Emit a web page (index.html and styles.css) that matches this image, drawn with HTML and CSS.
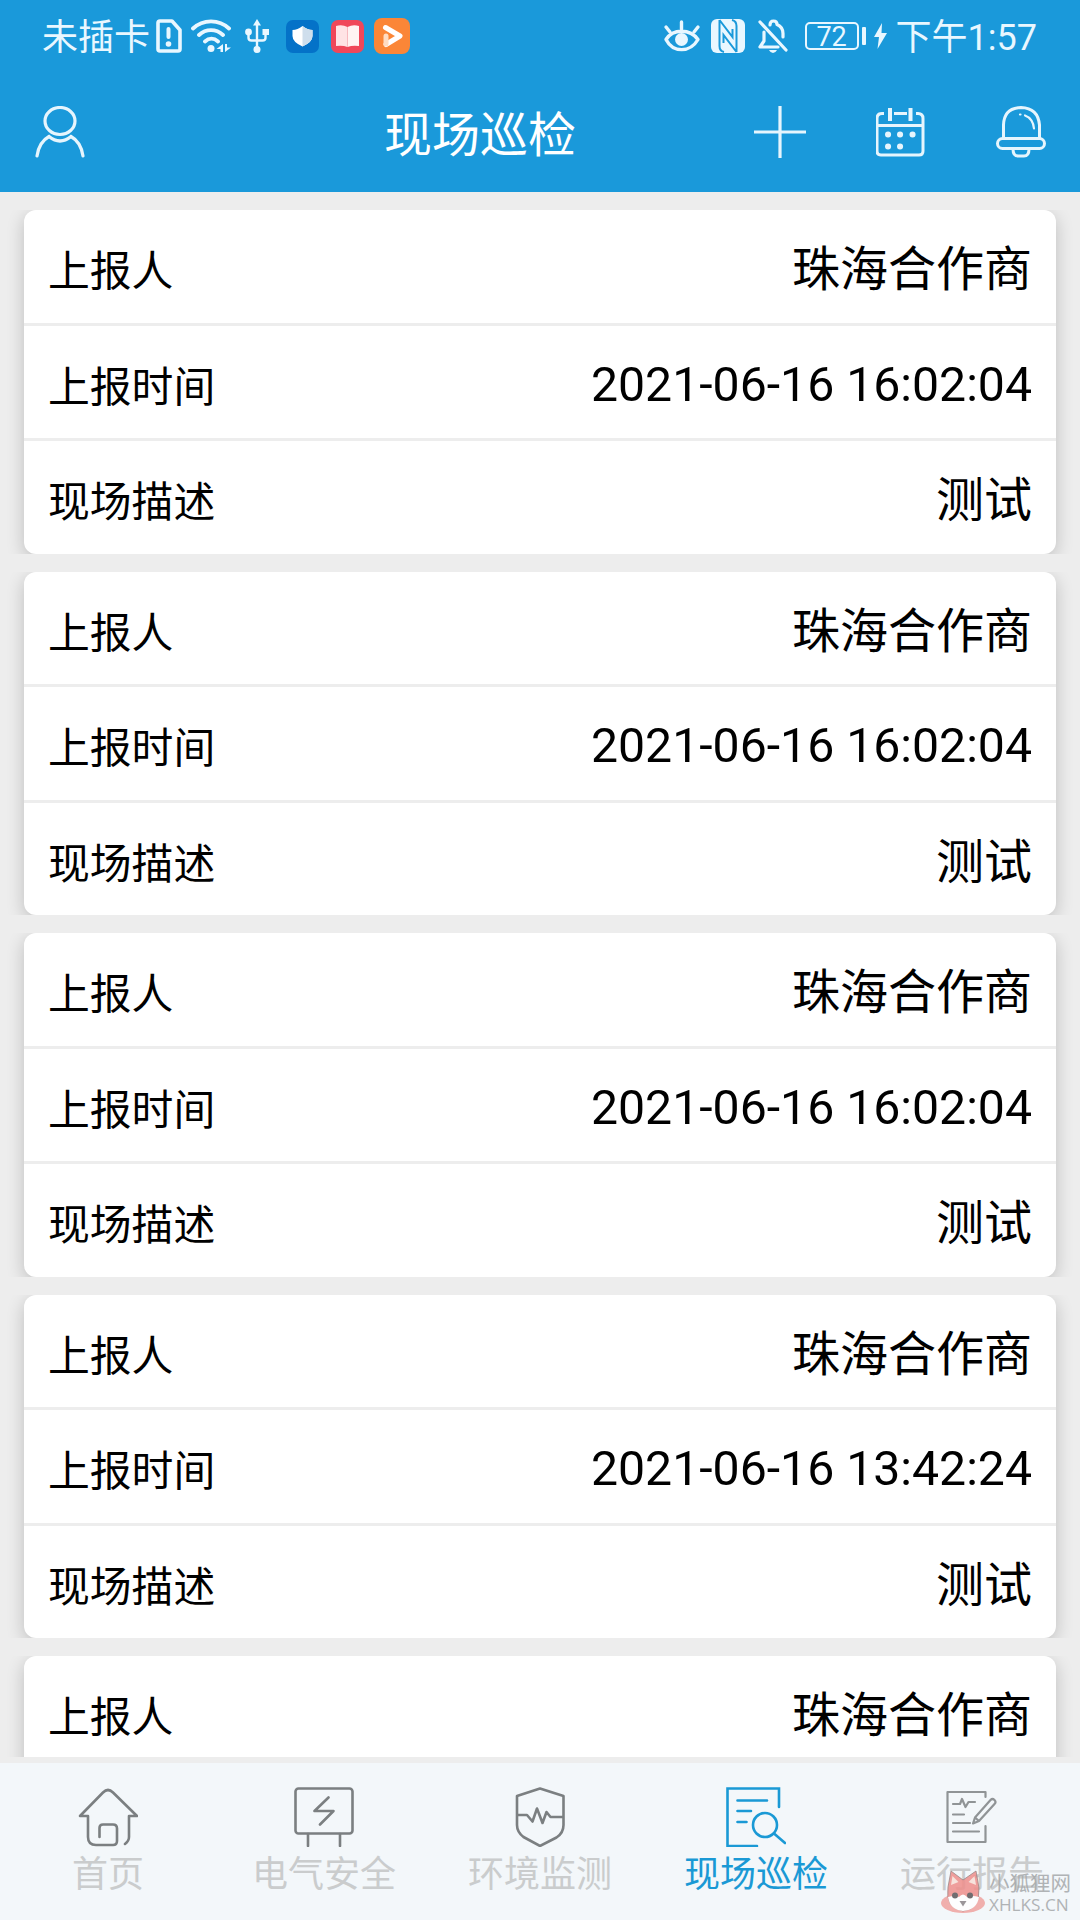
FILE: index.html
```html
<!DOCTYPE html>
<html lang="zh-CN">
<head>
    <meta charset="UTF-8">
    <meta name="viewport" content="width=device-width, initial-scale=1.0">
    <title>现场巡检</title>
    <link rel="stylesheet" href="styles.css">
</head>
<body>
    <header class="header">
        <!-- 状态栏 -->
        <div class="status">
            <div class="status-left">
                <span>未插卡</span>
                <svg class="sim" width="26" height="34" viewBox="0 0 26 34" fill="none" stroke="currentColor" stroke-width="3.6" stroke-linejoin="round">
                    <path d="M4 2h12l8 9v19a2 2 0 0 1-2 2H4a2 2 0 0 1-2-2V4a2 2 0 0 1 2-2z"/>
                    <path d="M12.5 10v8" stroke-width="4" stroke-linecap="round"/>
                    <circle cx="12.5" cy="25" r="2.8" fill="currentColor" stroke="none"/>
                </svg>
                <svg class="wifi" width="40" height="34" viewBox="0 0 40 34" fill="none" stroke="currentColor" stroke-width="3.8" stroke-linecap="round">
                    <path d="M2 9.5c10-9.500 26-9.500 36 0M8 16c7-6.600 17-6.600 24 0M14 22.500c4-3.700 9-3.700 13 0"/>
                    <circle cx="20" cy="29.500" r="3.500" fill="currentColor" stroke="none"/>
                    <path d="M32 25v8h-2.500v-3h-4zM34 33v-8h2v3.500h4z" fill="currentColor" stroke="none"/>
                </svg>
                <svg class="usb" width="24" height="34" viewBox="0 0 24 34" fill="none" stroke="currentColor" stroke-width="2.400">
                    <path d="M12 5v25M3.500 14v5q0 2.500 3 2.500h11q3 0 3-2.500v-5"/>
                    <path d="M12 0l4 6.500H8z" fill="currentColor" stroke="none"/>
                    <circle cx="3.500" cy="13" r="3.400" fill="currentColor" stroke="none"/>
                    <path d="M17.500 10H24v6h-6.500z" fill="currentColor" stroke="none"/>
                    <circle cx="12" cy="30.500" r="3.500" fill="currentColor" stroke="none"/>
                </svg>
                <svg class="app-guard" width="33" height="33" viewBox="0 0 33 33">
                    <rect width="33" height="33" rx="7" fill="#0472c8"/>
                    <path d="M16.500 6q5 4 10 4v6q0 6-10 10.500-10-4.500-10-10.500v-6q5 0 10-4z" fill="#fff"/>
                    <path d="M16.500 6q5 4 10 4v6q0 6-10 10.500z" fill="#cfdeec"/>
                </svg>
                <svg class="app-book" width="33" height="33" viewBox="0 0 33 33">
                    <rect width="33" height="33" rx="7" fill="#f0475a"/>
                    <path d="M5 6q6-2 11.500 1v20q-5-2-11.500-1z" fill="#ffe3e5"/>
                    <path d="M28 6q-6-2-11.500 1v20q5-2 11.500-1z" fill="#fff3f3"/>
                    <path d="M16.500 7v20" stroke="#f7b9bf"/>
                </svg>
                <svg class="app-play" width="36" height="36" viewBox="0 0 36 36">
                    <rect width="36" height="36" rx="8" fill="#fb8637"/>
                    <path d="M11.500 9.500L26 18 12 26.500" fill="none" stroke="#fff" stroke-width="5" stroke-linecap="round" stroke-linejoin="round"/>
                    <path d="M12 18v8" stroke="#ffdcc2" stroke-width="5" stroke-linecap="round"/>
                </svg>
            </div>
            <div class="status-right">
                <svg class="eye" width="38" height="34" viewBox="0 0 38 34" fill="none" stroke="currentColor" stroke-width="3.400" stroke-linecap="round" stroke-linejoin="round">
                    <path d="M3 20.500C10 9.500 27 9.500 35 20.500 27 34 10 34 3 20.500z"/>
                    <circle cx="18.500" cy="20.500" r="6.500" fill="currentColor" stroke="none"/>
                    <path d="M18.500 3v7M3 8l4 5M35 8l-4 5"/>
                </svg>
                <svg class="nfc" width="34" height="34" viewBox="0 0 34 34">
                    <rect width="34" height="34" rx="6" fill="currentColor"/>
                    <path d="M8.500 1v26q0 5 4.500 6M25.500 33V7q0-5-4.500-6M8.500 1L21.500 18V10M25.500 33L12.500 16v8" fill="none" stroke="#1a99da" stroke-width="2"/>
                </svg>
                <svg class="mute" width="30" height="34" viewBox="0 0 30 34" fill="none" stroke="currentColor" stroke-width="3.200" stroke-linecap="round" stroke-linejoin="round">
                    <path d="M2 3l26 28M6 13v9l-4 6h18M12 6q0-4 3.500-4t3.500 3.500q6 2.500 6 9V18"/>
                    <path d="M11 31h8q-1.500 3-4 3t-4-3z" fill="currentColor" stroke="none"/>
                </svg>
                <div class="battery">72</div>
                <svg class="bolt" width="13" height="26" viewBox="0 0 13 26" fill="currentColor"><path d="M8 0L0 14h5L3.500 26 13 10H7.500z"/></svg>
                <span>下午1:57</span>
            </div>
        </div>
        <!-- 标题栏 -->
        <div class="navbar">
            <svg class="user" width="50" height="52" viewBox="0 0 50 52" fill="none" stroke="currentColor" stroke-width="3.200" stroke-linecap="round">
                <ellipse cx="25" cy="15" rx="15" ry="13.500"/>
                <path d="M2 50q2-14 12-19.500 11 9 22 0Q46 36 48 50"/>
            </svg>
            <h1>现场巡检</h1>
            <div class="actions">
                <svg width="52" height="52" viewBox="0 0 52 52" stroke="currentColor" stroke-width="3.200"><path d="M26 0v52M0 26h52"/></svg>
                <svg width="50" height="52" viewBox="1 0 50 52" fill="none" stroke="currentColor" stroke-width="3">
                    <path d="M9 7.500H7q-5 0-5 5V45q0 4 4 4h38q4 0 4-4V12.500q0-5-5-5h-2M19 7.500h13M2 19.500h46"/>
                    <path d="M15 2v13M35.500 2v13" stroke-width="4"/>
                    <path d="M13 28.500h.1M25 28.500h.1M37.500 28.500h.1M13 40.500h.1M25 40.500h.1" stroke-width="6" stroke-linecap="round"/>
                </svg>
                <svg width="50" height="52" viewBox="0 0 50 52" fill="none" stroke="currentColor" stroke-width="3" stroke-linecap="round">
                    <path d="M7.500 32V19Q8 2 25 1.500 42 2 43.500 19v13"/>
                    <rect x="1.500" y="32.500" width="47" height="10" rx="5"/>
                    <path d="M17 43q0 7 5 7h6q5 0 5-7"/>
                    <path d="M29 9.500q8 3 9 13M24 8.500h.5" stroke-width="2.200"/>
                </svg>
            </div>
        </div>
    </header>

    <main class="list">
        <div class="item">
            <ul class="card">
                <li><label>上报人</label><span>珠海合作商</span></li>
                <li><label>上报时间</label><span class="time">2021-06-16 16:02:04</span></li>
                <li><label>现场描述</label><span>测试</span></li>
            </ul>
        </div>
        <div class="item">
            <ul class="card">
                <li><label>上报人</label><span>珠海合作商</span></li>
                <li><label>上报时间</label><span class="time">2021-06-16 16:02:04</span></li>
                <li><label>现场描述</label><span>测试</span></li>
            </ul>
        </div>
        <div class="item">
            <ul class="card">
                <li><label>上报人</label><span>珠海合作商</span></li>
                <li><label>上报时间</label><span class="time">2021-06-16 16:02:04</span></li>
                <li><label>现场描述</label><span>测试</span></li>
            </ul>
        </div>
        <div class="item">
            <ul class="card">
                <li><label>上报人</label><span>珠海合作商</span></li>
                <li><label>上报时间</label><span class="time">2021-06-16 13:42:24</span></li>
                <li><label>现场描述</label><span>测试</span></li>
            </ul>
        </div>
        <div class="item">
            <ul class="card">
                <li><label>上报人</label><span>珠海合作商</span></li>
                <li></li>
                <li></li>
            </ul>
        </div>
    </main>

    <!-- 底部菜单 -->
    <nav class="tabbar">
        <a class="tab">
            <svg width="60" height="60" viewBox="0 0 60 60" fill="none" stroke="currentColor" stroke-width="2.600" stroke-linecap="round" stroke-linejoin="round">
                <path d="M21.500 50V41q0-3.500 3.500-3.500h10q4 0 4 4V54q0 4-4 4H18q-8 0-8-8V29H2L25 5.500q5-5 10 0L59 29h-8v21q0 4-4 7"/>
            </svg>
            <span>首页</span>
        </a>
        <a class="tab">
            <svg width="60" height="60" viewBox="0 0 60 60" fill="none" stroke="currentColor" stroke-width="2.600" stroke-linecap="round" stroke-linejoin="round">
                <rect x="1.500" y="1.500" width="57" height="45" rx="3"/>
                <path d="M14 47v12M46 47v12M34.500 10.500L20.500 24h19L26 37.500"/>
            </svg>
            <span>电气安全</span>
        </a>
        <a class="tab">
            <svg width="60" height="60" viewBox="0 0 60 60" fill="none" stroke="currentColor" stroke-width="2.600" stroke-linejoin="round">
                <path d="M30 1.500L53.500 9v29q0 8-7 12.500L30 59 13.500 50Q7 45 7 38V9z"/>
                <path d="M7 28h10l5.500 6.500 4.500-13L32.500 36l4-11 4 5h13"/>
            </svg>
            <span>环境监测</span>
        </a>
        <a class="tab active">
            <svg width="60" height="60" viewBox="0 0 60 60" fill="none" stroke="currentColor" stroke-width="2.600" stroke-linecap="round">
                <path d="M53 20V1.500H1.500V59H31M11.500 13.500H41M11.500 24H25M11.500 35h9"/>
                <circle cx="39" cy="38" r="12"/>
                <path d="M48 46.500L59 56"/>
            </svg>
            <span>现场巡检</span>
        </a>
        <a class="tab report">
            <svg width="60" height="60" viewBox="1 0 60 60" fill="none" stroke="currentColor" stroke-width="2.200" stroke-linecap="round" stroke-linejoin="round">
                <path d="M44.500 10V5H6.500v50h38V39M12 17h7l2-5 3.500 8 3-5H34M12 27.500h11M12 36h17M12 44.500h26"/>
                <path d="M49.500 13q2-2 4 0t0 4L38 34l-4-3.500zM34 30.500L32 36.500l6-2.500"/>
            </svg>
            <span>运行报告</span>
        </a>
    </nav>

    <!-- 水印 -->
    <div class="watermark">
        <svg width="44" height="46" viewBox="0 0 44 46">
            <ellipse cx="22" cy="33" rx="22" ry="10" fill="#f0a3a0"/>
            <path d="M7 17L10 1l12 9L35 1l3 17q1 21-16 23Q4 38 7 17z" fill="#ef8f8c" stroke="#8d7675" stroke-width=".8"/>
            <path d="M10 15l1.500-9 6 6zM35 15l-1.500-9-6 6z" fill="#f8e0d8"/>
            <path d="M7 27q7-2 11 0 4-5 8 0 5-2 12 0-2 13-16 14Q9 40 7 27z" fill="#fff"/>
            <circle cx="14" cy="25.500" r="3" fill="#5b5659"/>
            <circle cx="29" cy="25.500" r="3" fill="#5b5659"/>
            <path d="M18.500 31h7L22 36.500z" fill="#8b8589"/>
        </svg>
        <div>
            <p class="wm-name">小狐狸网</p>
            <p class="wm-site">XHLKS.CN</p>
        </div>
    </div>
</body>
</html>
```

FILE: styles.css
```css
* {
    margin: 0;
    padding: 0;
    box-sizing: border-box;
}

body {
    position: relative;
    display: flex;
    flex-direction: column;
    width: 1080px;
    height: 1920px;
    overflow: hidden;
    background: #ededed;
    font-family: Roboto, "Noto Sans CJK SC", sans-serif;
    color: #000;
}

svg {
    display: block;
    flex-shrink: 0;
}

/* 顶部 */
.header {
    height: 192px;
    background: #1a99da;
    color: #fff;
}

.status {
    display: flex;
    justify-content: space-between;
    height: 72px;
    padding: 0 43px 0 42px;
    font-size: 36px;
    color: #e9f7ff;
}

.status span {
    padding-top: 3px;
    line-height: 72px;
}

.status-left,
.status-right {
    display: flex;
    align-items: center;
    height: 72px;
}

.sim { margin-left: 6px; }
.wifi { margin-left: 9px; }
.usb { margin-left: 14px; }
.app-guard { margin-left: 17px; }
.app-book { margin-left: 12px; }
.app-play { margin-left: 10px; }

.nfc { margin-left: 10px; }
.mute { margin-left: 13px; }
.bolt { margin: 0 9px 0 15px; }

.battery {
    position: relative;
    width: 54px;
    height: 28px;
    margin-left: 17px;
    border: 2px solid currentColor;
    border-radius: 5px;
    font-size: 27px;
    line-height: 26px;
    text-align: center;
}

.battery::after {
    content: "";
    position: absolute;
    top: 3px;
    right: -9px;
    width: 4px;
    height: 18px;
    border-radius: 1px;
    background: currentColor;
}

.navbar {
    display: flex;
    align-items: center;
    height: 120px;
    padding: 0 34px 0 35px;
}

.navbar svg {
    color: #e6f5fd;
}

.navbar h1 {
    margin-left: 299px;
    padding-top: 7px;
    font-size: 48px;
    font-weight: 400;
    line-height: 113px;
}

.actions {
    display: flex;
    gap: 70px;
    margin-left: auto;
}

/* 列表 */
.list {
    height: 1565px;
    padding-top: 18px;
    overflow: hidden;
}

/* 裁掉上下阴影，只保留左右 */
.item {
    margin-bottom: 18px;
    padding: 0 24px;
    overflow: hidden;
}

.card {
    list-style: none;
    border-radius: 12px;
    background: #fff;
    box-shadow: 0 5px 18px rgba(0, 0, 0, 0.2);
}

.card li {
    display: flex;
    justify-content: space-between;
    height: 115.5px;
    padding: 0 24px;
    border-bottom: 3px solid #ededed;
    line-height: 112px;
}

.card li:last-child {
    height: 112.5px;
    border-bottom: none;
}

.card label {
    padding-top: 6px;
    font-size: 41.8px;
}

.card span {
    padding-top: 4px;
    font-size: 48px;
}

.card .time {
    padding-top: 3px;
    font-size: 48.2px;
}

/* 底部 */
.tabbar {
    display: flex;
    height: 157px;
    margin-top: 6px;
    background: #f3f7fa;
}

.tab {
    display: flex;
    flex: 1;
    flex-direction: column;
    align-items: center;
    padding-top: 24px;
    color: #7b7f81;
}

.tab span {
    padding-top: 3px;
    font-size: 36px;
    line-height: 50px;
    color: #cacccd;
}

.tab.active,
.tab.active span {
    color: #1a99d5;
}

.tab.report svg {
    color: #909496;
}

.watermark {
    position: absolute;
    right: 9px;
    bottom: 4px;
    display: flex;
    align-items: center;
    gap: 4px;
    color: #a5a8aa;
    opacity: 0.85;
}

.wm-name {
    font-size: 20.5px;
    line-height: 22px;
}

.wm-site {
    font-family: "Open Sans", sans-serif;
    font-size: 17.2px;
    line-height: 19px;
}
```
